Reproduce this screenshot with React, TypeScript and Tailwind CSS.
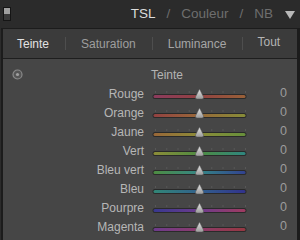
import React from "react";

const rows: { label: string; c: [string, string, string] }[] = [
  { label: "Rouge", c: ["#a8406c", "#b04848", "#b8703c"] },
  { label: "Orange", c: ["#b04848", "#b87a3c", "#a0a83c"] },
  { label: "Jaune", c: ["#b8783c", "#a8a83c", "#78ac40"] },
  { label: "Vert", c: ["#a8a83c", "#58a848", "#30a098"] },
  { label: "Bleu vert", c: ["#58a848", "#38a0a0", "#3448ac"] },
  { label: "Bleu", c: ["#34a08c", "#3470a8", "#3434a8"] },
  { label: "Pourpre", c: ["#3c3cac", "#8040a8", "#c04070"] },
  { label: "Magenta", c: ["#8040a8", "#a8407c", "#b43c48"] },
];

function Slider({ c, id }: { c: [string, string, string]; id: string }) {
  const ticks = [0, 1, 2, 3, 4, 5, 6, 7, 8];
  return (
    <svg width="96" height="19" viewBox="0 0 96 19" className="block">
      <defs>
        <linearGradient id={`g${id}`} x1="0" x2="1" y1="0" y2="0">
          <stop offset="0" stopColor={c[0]} />
          <stop offset="0.5" stopColor={c[1]} />
          <stop offset="1" stopColor={c[2]} />
        </linearGradient>
        <linearGradient id={`t${id}`} x1="0" x2="0" y1="0" y2="1">
          <stop offset="0" stopColor="#e6e6e6" />
          <stop offset="1" stopColor="#9a9a9a" />
        </linearGradient>
      </defs>
      {ticks.map((i) => (
        <rect key={i} x={3 + i * 11.25} y={6} width={1} height={2} fill="#575757" />
      ))}
      <rect x="0.5" y="9" width="94" height="5" rx="2.5" fill="#2a2a2a" />
      <rect x="1.5" y="10" width="92" height="3" rx="1.5" fill={`url(#g${id})`} opacity="0.78" />
      <path d="M47.5 4 L51.5 12 Q52 14 50 14 L45 14 Q43 14 43.5 12 Z" fill={`url(#t${id})`} stroke="#555" strokeWidth="0.5" />
    </svg>
  );
}

export default function App() {
  return (
    <div
      className="w-[300px] h-[240px] overflow-hidden bg-[#2b2b2b] flex flex-col"
      style={{ fontFamily: '"Liberation Sans", Arial, sans-serif' }}
    >
      <div className="h-[28px] flex items-center pl-[3px] pr-[5px] shrink-0">
        <div className="w-[8px] h-[14px] border border-[#151515] bg-[#3a3a3a] flex flex-col">
          <div className="h-[6px] bg-[#a0a0a0]" />
        </div>
        <div className="ml-auto flex items-center text-[13.5px]">
          <span className="text-[#dcdcdc]">TSL</span>
          <span className="text-[#6e6e6e] mx-[11px]">/</span>
          <span className="text-[#6e6e6e]">Couleur</span>
          <span className="text-[#6e6e6e] mx-[11px]">/</span>
          <span className="text-[#6e6e6e]">NB</span>
          <svg width="10" height="8" viewBox="0 0 10 8" className="ml-[12px] mt-[2px]">
            <path d="M0 0 L10 0 L5 8 Z" fill="#b8b8b8" />
          </svg>
        </div>
      </div>
      <div className="flex-1 flex flex-col border-l-2 border-r-[3px] border-t border-[#1c1c1c] ml-px">
        <div className="h-[30px] bg-[#3b3b3b] border-b border-[#1e1e1e] flex items-center text-[12px] shrink-0">
          <span className="text-[#e2e2e2] ml-[14px]">Teinte</span>
          <span className="w-px h-[13px] bg-[#4e4e4e] ml-[16px]" />
          <span className="text-[#9e9e9e] ml-[15px]">Saturation</span>
          <span className="w-px h-[13px] bg-[#4e4e4e] ml-[16px]" />
          <span className="text-[#a6a6a6] ml-[15px]">Luminance</span>
          <span className="w-px h-[13px] bg-[#4e4e4e] ml-[16px]" />
          <span className="text-[#b4b4b4] ml-[14px] -mt-[3px]">Tout</span>
        </div>
        <div className="flex-1 bg-[#464646] pt-[6px] text-[12px]">
          <div className="h-[19px] flex items-center relative">
            <svg width="11" height="11" viewBox="0 0 11 11" className="absolute left-[9px] top-[4px]">
              <circle cx="5.5" cy="5.5" r="4.5" fill="#555" stroke="#8a8a8a" strokeWidth="1.2" />
              <circle cx="5.5" cy="5.5" r="1.6" fill="#a0a0a0" />
            </svg>
            <span className="ml-[148px] text-[#b4b4b4]">Teinte</span>
          </div>
          {rows.map((r, i) => (
            <div key={r.label} className="h-[19px] flex items-center">
              <span className="w-[141px] text-right text-[#b6b6b6]">{r.label}</span>
              <div className="ml-[8px] mt-[1px]">
                <Slider c={r.c} id={String(i)} />
              </div>
              <span className="ml-[32px] text-[#9c9c9c] text-[12.5px]">0</span>
            </div>
          ))}
        </div>
      </div>
    </div>
  );
}
